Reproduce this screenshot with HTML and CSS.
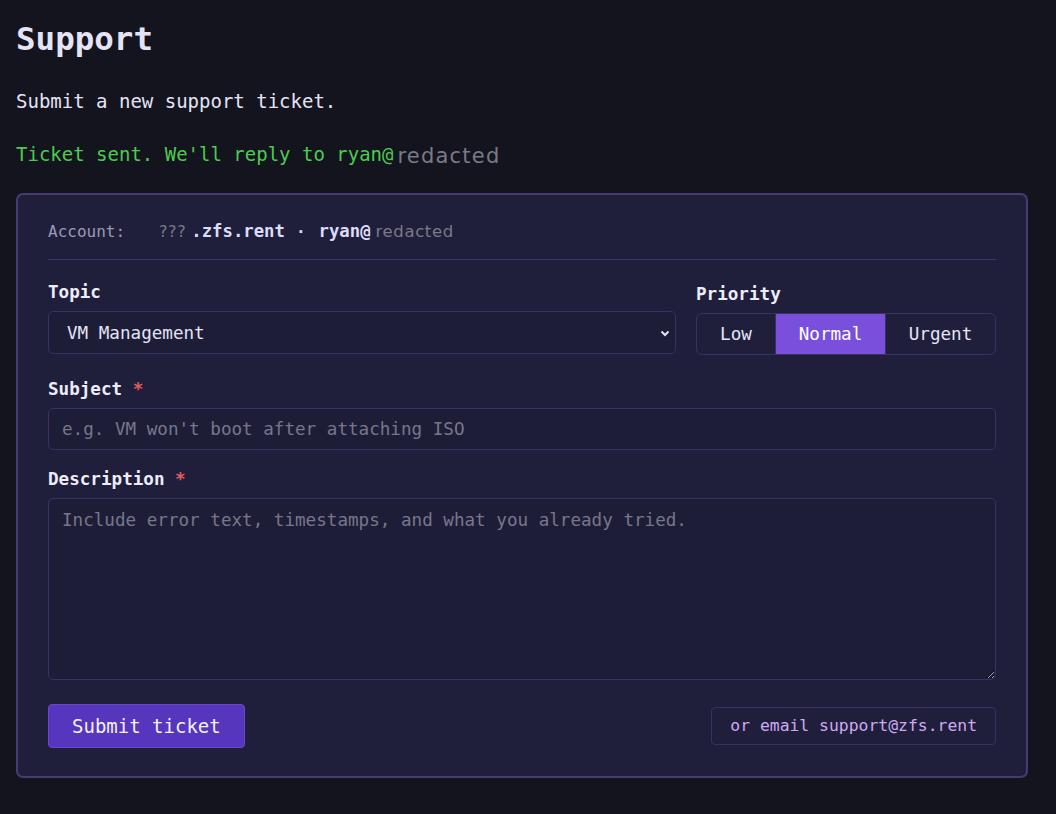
FILE: index.html
```html
<!DOCTYPE html>
<html lang="en">

<head>
  <meta charset="UTF-8">
  <meta name="viewport" content="width=device-width, initial-scale=1">
  <title>Support</title>
  <link rel="stylesheet" href="styles.css">
</head>

<body>
  <main class="page">
    <h1 class="title">Support</h1>
    <p class="lead">Submit a new support ticket.</p>
    <p class="notice">Ticket sent. We'll reply to ryan@<span class="redacted big">redacted</span></p>

    <form class="card">
      <div class="account">
        <span class="account-label">Account:</span>
        <span class="redacted pre">???</span><b>.zfs.rent</b>
        <span class="dot">·</span>
        <b>ryan@</b><span class="redacted post">redacted</span>
      </div>

      <div class="row">
        <div class="field grow">
          <label for="topic">Topic</label>
          <select id="topic">
            <option>VM Management</option>
            <option>Billing</option>
            <option>Networking</option>
            <option>Other</option>
          </select>
        </div>
        <div class="field">
          <label>Priority</label>
          <div class="segmented">
            <button type="button" class="seg">Low</button>
            <button type="button" class="seg active">Normal</button>
            <button type="button" class="seg">Urgent</button>
          </div>
        </div>
      </div>

      <div class="field subject">
        <label for="subject">Subject <span class="req">*</span></label>
        <input type="text" id="subject" placeholder="e.g. VM won't boot after attaching ISO">
      </div>

      <div class="field description">
        <label for="desc">Description <span class="req">*</span></label>
        <textarea id="desc" placeholder="Include error text, timestamps, and what you already tried."></textarea>
      </div>

      <div class="actions">
        <button type="submit" class="submit">Submit ticket</button>
        <a class="email" href="mailto:support@zfs.rent">or email support@zfs.rent</a>
      </div>
    </form>
  </main>

  <script>
    document.querySelectorAll('.seg').forEach(btn => {
      btn.addEventListener('click', () => {
        document.querySelectorAll('.seg').forEach(b => b.classList.remove('active'));
        btn.classList.add('active');
      });
    });
    document.querySelector('.card').addEventListener('submit', e => e.preventDefault());
  </script>
</body>

</html>
```

FILE: styles.css
```css
:root {
  --bg: #14141e;
  --card-bg: #201f3b;
  --card-border: #463b74;
  --field-bg: #1e1d38;
  --field-border: #3a3163;
  --text: #e4e4f6;
  --muted: #7a7a86;
  --accent: #7a4fdc;
  --mono: "DejaVu Sans Mono", monospace;
}

* {
  box-sizing: border-box;
}

body {
  margin: 0;
  background: var(--bg);
  color: var(--text);
  font-family: var(--mono);
  font-size: 17.6px;
}

.page {
  padding: 16px;
  max-width: 1044px;
}

.title {
  margin: 3px 0 0;
  font-size: 32.5px;
  line-height: 40px;
}

.lead {
  margin: 30px 0 0;
  font-size: 19px;
  line-height: 24px;
}

.notice {
  margin: 28px 0 0;
  font-size: 19px;
  line-height: 26px;
  color: #4ccb4f;
}

.redacted {
  font-family: "DejaVu Sans", sans-serif;
  color: var(--muted);
  font-size: 16.5px;
  letter-spacing: 0.6px;
}

.redacted.pre {
  margin-right: 5px;
  font-size: 16px;
}

.redacted.post {
  margin-left: 5px;
}

.redacted.big {
  font-size: 21px;
  letter-spacing: 1.2px;
  margin-left: 4px;
  vertical-align: -2px;
}

.card {
  margin-top: 24px;
  background: var(--card-bg);
  border: 2px solid var(--card-border);
  border-radius: 7px;
  padding: 26px 30px 28px;
}

.account {
  display: flex;
  align-items: baseline;
  padding-bottom: 18px;
  border-bottom: 1px solid #3e3566;
  font-size: 16px;
  color: #d6d6f0;
}

.account-label {
  color: #9a9ab4;
  width: 111px;
}

.account b {
  font-size: 17.3px;
  color: #dcdcf7;
}

.dot {
  margin: 0 13px 0 11px;
  font-weight: bold;
}

.row {
  display: flex;
  gap: 20px;
  align-items: flex-start;
}

.grow {
  flex: 1;
}

.field {
  display: flex;
  flex-direction: column;
  margin-top: 20px;
}

.row .field {
  margin-top: 21px;
}

.field.subject {
  margin-top: 23px;
}

.field.description {
  margin-top: 18px;
}

label {
  font-weight: bold;
  font-size: 17.6px;
  line-height: 22px;
  margin-bottom: 8px;
  color: #ececfa;
}

.row .field:last-child label {
  margin-top: 2px;
}

.req {
  color: #e25b5b;
}

select,
input[type="text"],
textarea {
  width: 100%;
  font-family: var(--mono);
  font-size: 17.6px;
  color: var(--text);
  background: var(--field-bg);
  border: 1px solid var(--field-border);
  border-radius: 5px;
}

select {
  height: 43px;
  padding: 0 14px 0 18px;
  appearance: none;
  background-image: url("data:image/svg+xml;utf8,<svg xmlns='http://www.w3.org/2000/svg' width='12' height='8' viewBox='0 0 12 8'><path d='M2.5 2.5l3.5 3.5 3.5-3.5' fill='none' stroke='%23e4e4f6' stroke-width='2'/></svg>");
  background-repeat: no-repeat;
  background-position: right 4px center;
}

input[type="text"] {
  height: 42px;
  padding: 0 13px;
}

textarea {
  height: 182px;
  padding: 10px 13px;
  resize: vertical;
  line-height: 22px;
}

::placeholder {
  color: #77778a;
}

.segmented {
  display: flex;
  height: 42px;
  border: 1px solid var(--field-border);
  border-radius: 6px;
  overflow: hidden;
}

.seg {
  font-family: var(--mono);
  font-size: 17.6px;
  color: var(--text);
  background: transparent;
  border: none;
  cursor: pointer;
  padding: 0;
}

.seg:nth-child(1) {
  width: 78px;
}

.seg:nth-child(2) {
  width: 110px;
}

.seg:nth-child(3) {
  width: 110px;
}

.seg+.seg {
  border-left: 1px solid var(--field-border);
}

.seg.active {
  background: var(--accent);
  color: #fff;
}

.actions {
  display: flex;
  justify-content: space-between;
  align-items: center;
  margin-top: 24px;
}

.submit {
  font-family: var(--mono);
  font-size: 19px;
  color: #f4f0ff;
  background: #5636bd;
  border: 1px solid #6a47d0;
  border-radius: 4px;
  height: 44px;
  padding: 0 23px;
  cursor: pointer;
}

.email {
  font-size: 16.4px;
  color: #cfa9f3;
  text-decoration: none;
  border: 1px solid var(--field-border);
  border-radius: 4px;
  height: 38px;
  line-height: 36px;
  padding: 0 18px;
}
```
